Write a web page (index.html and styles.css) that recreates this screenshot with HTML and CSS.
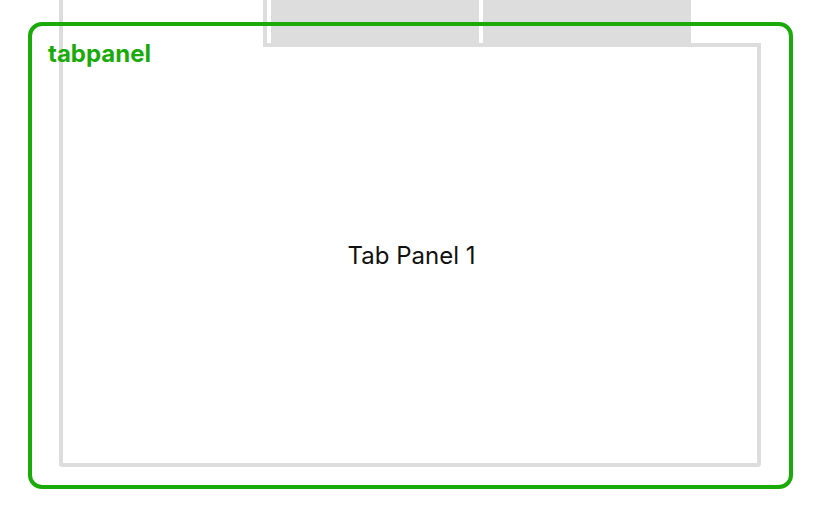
FILE: index.html
```html
<!DOCTYPE html>
<html lang="en">
<head>
  <meta charset="UTF-8">
  <meta name="viewport" content="width=device-width, initial-scale=1.0">
  <title>Tabs - tabpanel</title>
  <link rel="stylesheet" href="styles.css">
</head>
<body>
  <div class="stage">
    <div class="tabs">
      <div class="tab-row">
        <div class="tablist" role="tablist">
          <div class="tab" role="tab" aria-selected="true"></div>
          <div class="tab" role="tab" aria-selected="false"></div>
        </div>
      </div>
      <div class="tabpanel" role="tabpanel">
        <p>Tab Panel 1</p>
      </div>
    </div>

    <!-- highlight overlay -->
    <div class="highlight">
      <span class="highlight-label">tabpanel</span>
    </div>
  </div>
</body>
</html>
```

FILE: styles.css
```css
/* Global Styles */
* {
  margin: 0;
  padding: 0;
  box-sizing: border-box;
}

body {
  background: #fff;
  color: #111;
  font-family: 'Inter', 'Liberation Sans', sans-serif;
}

.stage {
  position: relative;
  width: 821px;
  height: 512px;
  overflow: hidden;
}

/* Tabs */
.tabs {
  margin-left: 59px;
  width: 702px;
}

.tab-row {
  height: 43px;
  border-left: 4px solid #ddd;
  display: flex;
}

.tablist {
  margin-left: 200px;
  display: flex;
  border-left: 4px solid #ddd;
}

.tab {
  width: 212px;
  background-color: #ddd;
  border-left: 4px solid #fff;
}

.tabpanel {
  height: 424px;
  border: 4px solid #ddd;
  border-top: 0;
  border-radius: 0 0 4px 4px;
  padding-top: 4px;
  background: linear-gradient(#ddd, #ddd) no-repeat 200px 0 / calc(100% - 200px) 4px;
  display: flex;
  align-items: center;
  justify-content: center;
}

.tabpanel p {
  font-size: 24px;
  margin-left: 3px;
}

/* Highlight overlay */
.highlight {
  position: absolute;
  left: 28px;
  top: 22px;
  width: 765px;
  height: 467px;
  border: 4px solid #1aab0b;
  border-radius: 14px;
  padding: 14px 16px;
  line-height: 1.2;
}

.highlight-label {
  color: #1aab0b;
  font-size: 24px;
  font-weight: 700;
}
```
